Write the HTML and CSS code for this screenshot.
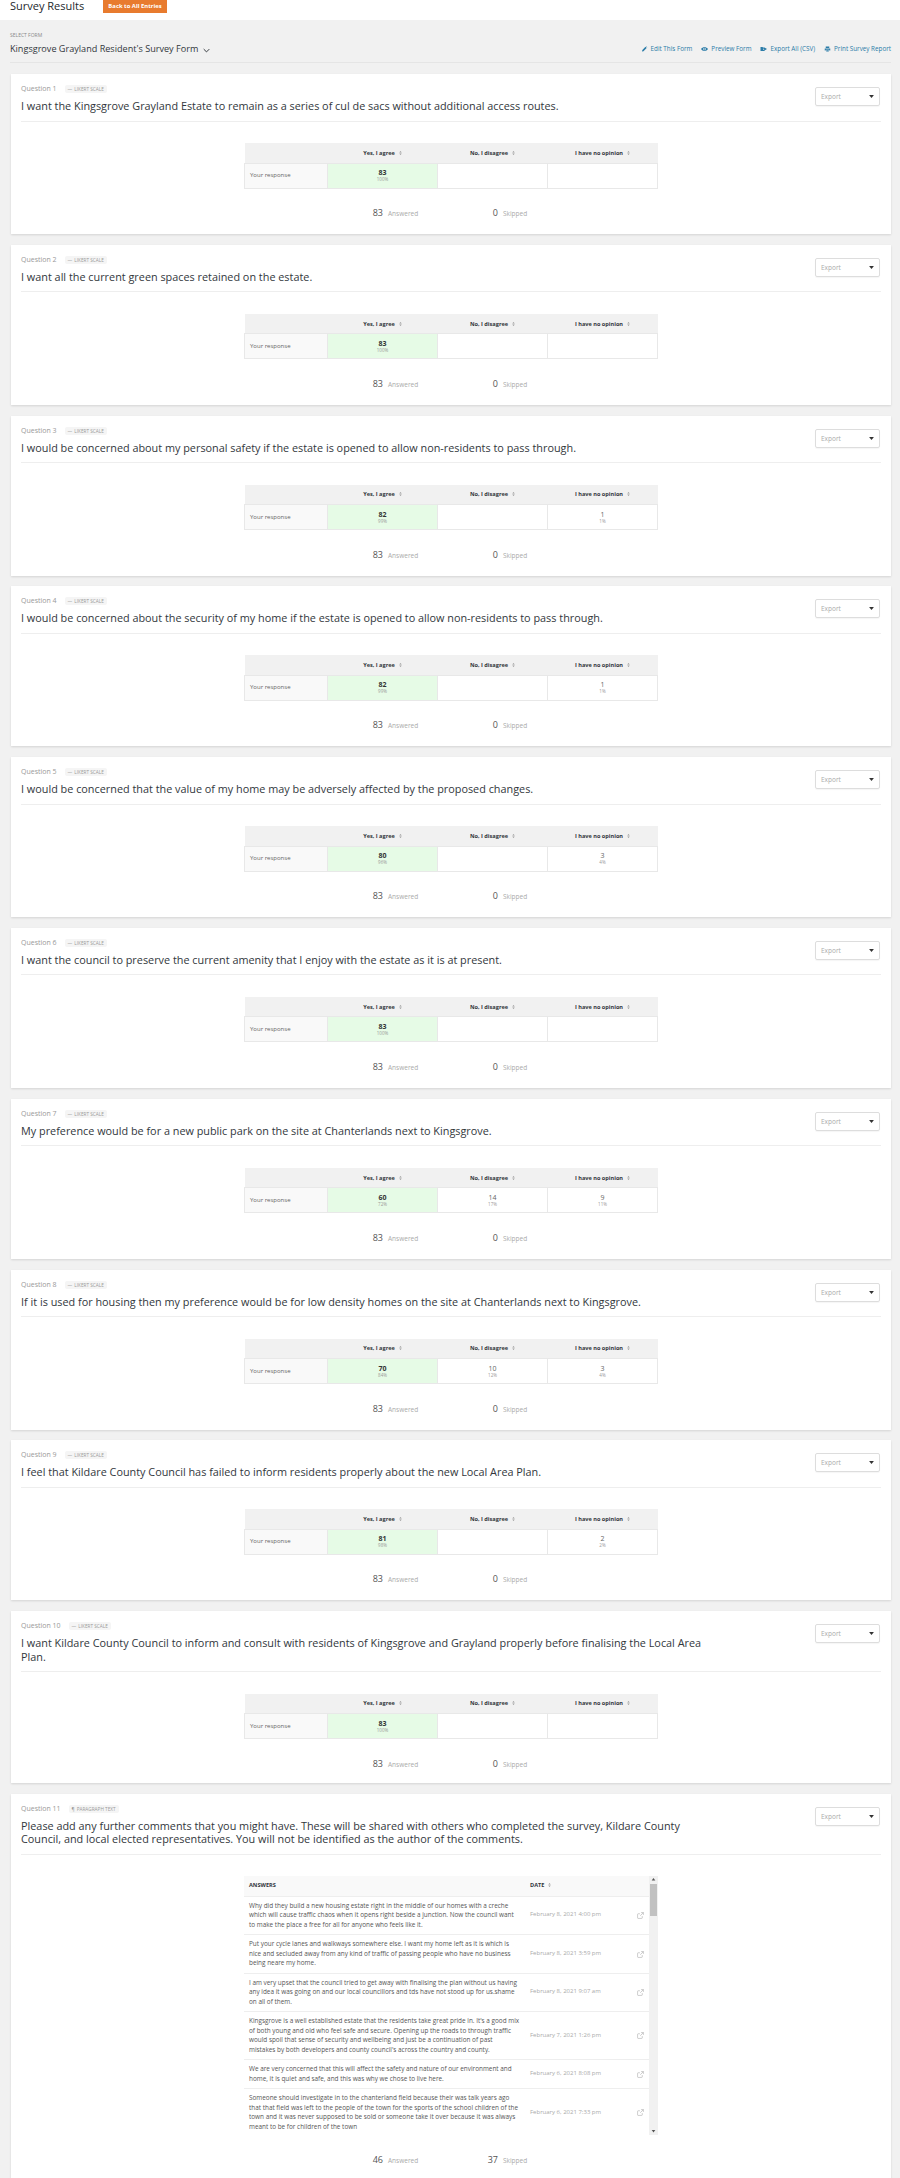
FILE: index.html
```html
<!DOCTYPE html>
<html lang="en">
<head>
    <meta charset="UTF-8">
    <title>Survey Results</title>
    <link rel="stylesheet" href="styles.css">
</head>
<body>
    <svg class="icon-defs" width="0" height="0">
        <symbol id="sort" viewBox="0 0 6 8"><path d="M3 0 5.500 3H.5zM3 8 .5 5h5z"/></symbol>
        <symbol id="ext" viewBox="0 0 12 12"><path d="M9 7v3a1 1 0 0 1-1 1H2a1 1 0 0 1-1-1V4a1 1 0 0 1 1-1h3M7 1h4v4M11 1 5.500 6.500" fill="none" stroke="currentColor"/></symbol>
        <symbol id="caret" viewBox="0 0 8 5"><path d="M0 0h8L4 5z"/></symbol>
    </svg>

    <header class="top-bar">
        <h1>Survey Results</h1>
        <a class="back-button">Back to All Entries</a>
    </header>

    <div class="form-bar">
        <div>
            <div class="select-label">SELECT FORM</div>
            <div class="form-name">Kingsgrove Grayland Resident's Survey Form
                <svg class="chevron" viewBox="0 0 10 6"><path d="M1 1l4 4 4-4" fill="none" stroke="currentColor" stroke-width="1.400"/></svg>
            </div>
        </div>
        <nav class="form-links">
            <a><svg viewBox="0 0 12 12"><path d="M1 11l.7-3L8 1.700 10.300 4 4 10.300zM9 .8l.7-.3 1.800 1.800-.3.700z"/></svg>Edit This Form</a>
            <a><svg viewBox="0 0 14 12"><path fill-rule="evenodd" d="M7 2c3 0 5.500 2 7 4-1.500 2-4 4-7 4S1.500 8 0 6c1.500-2 4-4 7-4zm0 1.500a2.500 2.500 0 1 0 0 5 2.500 2.500 0 0 0 0-5z"/><circle cx="7" cy="6" r="1.300"/></svg>Preview Form</a>
            <a><svg viewBox="0 0 14 12"><path d="M1 2h4l1 1h3v2H6v3h3v2H1zM9 4.500V3l5 3-5 3V7.500H7v-3z"/></svg>Export All (CSV)</a>
            <a><svg viewBox="0 0 13 12"><path fill-rule="evenodd" d="M3 1h7v3H3zM1 5h11v4h-2V7.500H3V9H1zM4 8.500h5V11H4z"/></svg>Print Survey Report</a>
        </nav>
    </div>

    <main class="questions">
        <section class="card">
            <div class="card-head">
                <div class="card-title">
                    <div class="question-meta"><span>Question 1</span><span class="type-tag"><i>&#8212;</i>LIKERT SCALE</span></div>
                    <h2>I want the Kingsgrove Grayland Estate to remain as a series of cul de sacs without additional access routes.</h2>
                </div>
                <div class="export-select">Export<svg viewBox="0 0 8 5"><use href="#caret"/></svg></div>
            </div>
            <table class="likert">
                <tr><th></th><th>Yes, I agree<svg viewBox="0 0 6 8"><use href="#sort"/></svg></th><th>No, I disagree<svg viewBox="0 0 6 8"><use href="#sort"/></svg></th><th>I have no opinion<svg viewBox="0 0 6 8"><use href="#sort"/></svg></th></tr>
                <tr><td class="row-label">Your response</td><td class="top"><b>83</b><small>100%</small></td><td></td><td></td></tr>
            </table>
            <div class="totals"><span><strong>83</strong>Answered</span><span><strong>0</strong>Skipped</span></div>
        </section>

        <section class="card">
            <div class="card-head">
                <div class="card-title">
                    <div class="question-meta"><span>Question 2</span><span class="type-tag"><i>&#8212;</i>LIKERT SCALE</span></div>
                    <h2>I want all the current green spaces retained on the estate.</h2>
                </div>
                <div class="export-select">Export<svg viewBox="0 0 8 5"><use href="#caret"/></svg></div>
            </div>
            <table class="likert">
                <tr><th></th><th>Yes, I agree<svg viewBox="0 0 6 8"><use href="#sort"/></svg></th><th>No, I disagree<svg viewBox="0 0 6 8"><use href="#sort"/></svg></th><th>I have no opinion<svg viewBox="0 0 6 8"><use href="#sort"/></svg></th></tr>
                <tr><td class="row-label">Your response</td><td class="top"><b>83</b><small>100%</small></td><td></td><td></td></tr>
            </table>
            <div class="totals"><span><strong>83</strong>Answered</span><span><strong>0</strong>Skipped</span></div>
        </section>

        <section class="card">
            <div class="card-head">
                <div class="card-title">
                    <div class="question-meta"><span>Question 3</span><span class="type-tag"><i>&#8212;</i>LIKERT SCALE</span></div>
                    <h2>I would be concerned about my personal safety if the estate is opened to allow non-residents to pass through.</h2>
                </div>
                <div class="export-select">Export<svg viewBox="0 0 8 5"><use href="#caret"/></svg></div>
            </div>
            <table class="likert">
                <tr><th></th><th>Yes, I agree<svg viewBox="0 0 6 8"><use href="#sort"/></svg></th><th>No, I disagree<svg viewBox="0 0 6 8"><use href="#sort"/></svg></th><th>I have no opinion<svg viewBox="0 0 6 8"><use href="#sort"/></svg></th></tr>
                <tr><td class="row-label">Your response</td><td class="top"><b>82</b><small>99%</small></td><td></td><td>1<small>1%</small></td></tr>
            </table>
            <div class="totals"><span><strong>83</strong>Answered</span><span><strong>0</strong>Skipped</span></div>
        </section>

        <section class="card">
            <div class="card-head">
                <div class="card-title">
                    <div class="question-meta"><span>Question 4</span><span class="type-tag"><i>&#8212;</i>LIKERT SCALE</span></div>
                    <h2>I would be concerned about the security of my home if the estate is opened to allow non-residents to pass through.</h2>
                </div>
                <div class="export-select">Export<svg viewBox="0 0 8 5"><use href="#caret"/></svg></div>
            </div>
            <table class="likert">
                <tr><th></th><th>Yes, I agree<svg viewBox="0 0 6 8"><use href="#sort"/></svg></th><th>No, I disagree<svg viewBox="0 0 6 8"><use href="#sort"/></svg></th><th>I have no opinion<svg viewBox="0 0 6 8"><use href="#sort"/></svg></th></tr>
                <tr><td class="row-label">Your response</td><td class="top"><b>82</b><small>99%</small></td><td></td><td>1<small>1%</small></td></tr>
            </table>
            <div class="totals"><span><strong>83</strong>Answered</span><span><strong>0</strong>Skipped</span></div>
        </section>

        <section class="card">
            <div class="card-head">
                <div class="card-title">
                    <div class="question-meta"><span>Question 5</span><span class="type-tag"><i>&#8212;</i>LIKERT SCALE</span></div>
                    <h2>I would be concerned that the value of my home may be adversely affected by the proposed changes.</h2>
                </div>
                <div class="export-select">Export<svg viewBox="0 0 8 5"><use href="#caret"/></svg></div>
            </div>
            <table class="likert">
                <tr><th></th><th>Yes, I agree<svg viewBox="0 0 6 8"><use href="#sort"/></svg></th><th>No, I disagree<svg viewBox="0 0 6 8"><use href="#sort"/></svg></th><th>I have no opinion<svg viewBox="0 0 6 8"><use href="#sort"/></svg></th></tr>
                <tr><td class="row-label">Your response</td><td class="top"><b>80</b><small>96%</small></td><td></td><td>3<small>4%</small></td></tr>
            </table>
            <div class="totals"><span><strong>83</strong>Answered</span><span><strong>0</strong>Skipped</span></div>
        </section>

        <section class="card">
            <div class="card-head">
                <div class="card-title">
                    <div class="question-meta"><span>Question 6</span><span class="type-tag"><i>&#8212;</i>LIKERT SCALE</span></div>
                    <h2>I want the council to preserve the current amenity that I enjoy with the estate as it is at present.</h2>
                </div>
                <div class="export-select">Export<svg viewBox="0 0 8 5"><use href="#caret"/></svg></div>
            </div>
            <table class="likert">
                <tr><th></th><th>Yes, I agree<svg viewBox="0 0 6 8"><use href="#sort"/></svg></th><th>No, I disagree<svg viewBox="0 0 6 8"><use href="#sort"/></svg></th><th>I have no opinion<svg viewBox="0 0 6 8"><use href="#sort"/></svg></th></tr>
                <tr><td class="row-label">Your response</td><td class="top"><b>83</b><small>100%</small></td><td></td><td></td></tr>
            </table>
            <div class="totals"><span><strong>83</strong>Answered</span><span><strong>0</strong>Skipped</span></div>
        </section>

        <section class="card">
            <div class="card-head">
                <div class="card-title">
                    <div class="question-meta"><span>Question 7</span><span class="type-tag"><i>&#8212;</i>LIKERT SCALE</span></div>
                    <h2>My preference would be for a new public park on the site at Chanterlands next to Kingsgrove.</h2>
                </div>
                <div class="export-select">Export<svg viewBox="0 0 8 5"><use href="#caret"/></svg></div>
            </div>
            <table class="likert">
                <tr><th></th><th>Yes, I agree<svg viewBox="0 0 6 8"><use href="#sort"/></svg></th><th>No, I disagree<svg viewBox="0 0 6 8"><use href="#sort"/></svg></th><th>I have no opinion<svg viewBox="0 0 6 8"><use href="#sort"/></svg></th></tr>
                <tr><td class="row-label">Your response</td><td class="top"><b>60</b><small>72%</small></td><td>14<small>17%</small></td><td>9<small>11%</small></td></tr>
            </table>
            <div class="totals"><span><strong>83</strong>Answered</span><span><strong>0</strong>Skipped</span></div>
        </section>

        <section class="card">
            <div class="card-head">
                <div class="card-title">
                    <div class="question-meta"><span>Question 8</span><span class="type-tag"><i>&#8212;</i>LIKERT SCALE</span></div>
                    <h2>If it is used for housing then my preference would be for low density homes on the site at Chanterlands next to Kingsgrove.</h2>
                </div>
                <div class="export-select">Export<svg viewBox="0 0 8 5"><use href="#caret"/></svg></div>
            </div>
            <table class="likert">
                <tr><th></th><th>Yes, I agree<svg viewBox="0 0 6 8"><use href="#sort"/></svg></th><th>No, I disagree<svg viewBox="0 0 6 8"><use href="#sort"/></svg></th><th>I have no opinion<svg viewBox="0 0 6 8"><use href="#sort"/></svg></th></tr>
                <tr><td class="row-label">Your response</td><td class="top"><b>70</b><small>84%</small></td><td>10<small>12%</small></td><td>3<small>4%</small></td></tr>
            </table>
            <div class="totals"><span><strong>83</strong>Answered</span><span><strong>0</strong>Skipped</span></div>
        </section>

        <section class="card">
            <div class="card-head">
                <div class="card-title">
                    <div class="question-meta"><span>Question 9</span><span class="type-tag"><i>&#8212;</i>LIKERT SCALE</span></div>
                    <h2>I feel that Kildare County Council has failed to inform residents properly about the new Local Area Plan.</h2>
                </div>
                <div class="export-select">Export<svg viewBox="0 0 8 5"><use href="#caret"/></svg></div>
            </div>
            <table class="likert">
                <tr><th></th><th>Yes, I agree<svg viewBox="0 0 6 8"><use href="#sort"/></svg></th><th>No, I disagree<svg viewBox="0 0 6 8"><use href="#sort"/></svg></th><th>I have no opinion<svg viewBox="0 0 6 8"><use href="#sort"/></svg></th></tr>
                <tr><td class="row-label">Your response</td><td class="top"><b>81</b><small>98%</small></td><td></td><td>2<small>2%</small></td></tr>
            </table>
            <div class="totals"><span><strong>83</strong>Answered</span><span><strong>0</strong>Skipped</span></div>
        </section>

        <section class="card">
            <div class="card-head">
                <div class="card-title">
                    <div class="question-meta"><span>Question 10</span><span class="type-tag"><i>&#8212;</i>LIKERT SCALE</span></div>
                    <h2>I want Kildare County Council to inform and consult with residents of Kingsgrove and Grayland properly before finalising the Local Area Plan.</h2>
                </div>
                <div class="export-select">Export<svg viewBox="0 0 8 5"><use href="#caret"/></svg></div>
            </div>
            <table class="likert">
                <tr><th></th><th>Yes, I agree<svg viewBox="0 0 6 8"><use href="#sort"/></svg></th><th>No, I disagree<svg viewBox="0 0 6 8"><use href="#sort"/></svg></th><th>I have no opinion<svg viewBox="0 0 6 8"><use href="#sort"/></svg></th></tr>
                <tr><td class="row-label">Your response</td><td class="top"><b>83</b><small>100%</small></td><td></td><td></td></tr>
            </table>
            <div class="totals"><span><strong>83</strong>Answered</span><span><strong>0</strong>Skipped</span></div>
        </section>

        <section class="card">
            <div class="card-head">
                <div class="card-title">
                    <div class="question-meta"><span>Question 11</span><span class="type-tag"><i>&#182;</i>PARAGRAPH TEXT</span></div>
                    <h2>Please add any further comments that you might have. These will be shared with others who completed the survey, Kildare County Council, and local elected representatives. You will not be identified as the author of the comments.</h2>
                </div>
                <div class="export-select">Export<svg viewBox="0 0 8 5"><use href="#caret"/></svg></div>
            </div>
            <div class="answers-box">
                <div class="answers-scroll">
                    <table class="answers">
                        <tr><th>ANSWERS</th><th>DATE<svg viewBox="0 0 6 8"><use href="#sort"/></svg></th><th></th></tr>
                        <tr><td>Why did they build a new housing estate right in the middle of our homes with a creche which will cause traffic chaos when it opens right beside a junction. Now the council want to make the place a free for all for anyone who feels like it.</td><td class="date">February 8, 2021 4:00 pm</td><td class="link"><svg viewBox="0 0 12 12"><use href="#ext"/></svg></td></tr>
                        <tr><td>Put your cycle lanes and walkways somewhere else. I want my home left as it is which is nice and secluded away from any kind of traffic of passing people who have no business being neare my home.</td><td class="date">February 8, 2021 3:59 pm</td><td class="link"><svg viewBox="0 0 12 12"><use href="#ext"/></svg></td></tr>
                        <tr><td>I am very upset that the council tried to get away with finalising the plan without us having any idea it was going on and our local councillors and tds have not stood up for us.shame on all of them.</td><td class="date">February 8, 2021 9:07 am</td><td class="link"><svg viewBox="0 0 12 12"><use href="#ext"/></svg></td></tr>
                        <tr><td>Kingsgrove is a well established estate that the residents take great pride in. It's a good mix of both young and old who feel safe and secure. Opening up the roads to through traffic would spoil that sense of security and wellbeing and just be a continuation of past mistakes by both developers and county council's across the country and county.</td><td class="date">February 7, 2021 1:26 pm</td><td class="link"><svg viewBox="0 0 12 12"><use href="#ext"/></svg></td></tr>
                        <tr><td>We are very concerned that this will affect the safety and nature of our environment and home, it is quiet and safe, and this was why we chose to live here.</td><td class="date">February 6, 2021 8:08 pm</td><td class="link"><svg viewBox="0 0 12 12"><use href="#ext"/></svg></td></tr>
                        <tr><td>Someone should investigate in to the chanterland field because their was talk years ago that that field was left to the people of the town for the sports of the school children of the town and it was never supposed to be sold or someone take it over because it was always meant to be for children of the town</td><td class="date">February 6, 2021 7:33 pm</td><td class="link"><svg viewBox="0 0 12 12"><use href="#ext"/></svg></td></tr>
                    </table>
                </div>
                <div class="scrollbar">
                    <svg class="arrow" viewBox="0 0 8 5"><path d="M4 0l3 4H1z"/></svg>
                    <div class="thumb"></div>
                    <svg class="arrow arrow-down" viewBox="0 0 8 5"><path d="M1 0h6L4 4z"/></svg>
                </div>
            </div>
            <div class="totals"><span><strong>46</strong>Answered</span><span><strong>37</strong>Skipped</span></div>
        </section>
    </main>
</body>
</html>
```
FILE: styles.css
```css
* {
    box-sizing: border-box;
}
html, body {
    height: 2178px;
    overflow: hidden;
}
body {
    margin: 0;
    background-color: #f1f1f1;
    color: #32373c;
    font-family: "Open Sans", "Noto Sans", sans-serif;
    font-size: 9px;
}
.icon-defs {
    position: absolute;
}
.top-bar {
    height: 20px;
    background-color: white;
    padding-left: 10px;
    display: flex;
    overflow: hidden;
}
h1 {
    margin: 0 18px 0 0;
    width: 75px;
    white-space: nowrap;
    font-size: 11px;
    font-weight: 400;
    line-height: 12px;
    color: #23282d;
}
.back-button {
    height: 13px;
    width: 64px;
    background-color: #e87b2e;
    color: white;
    font-size: 5.900px;
    font-weight: 700;
    line-height: 12px;
    text-align: center;
}
.form-bar {
    margin: 0 9px 0 10px;
    height: 43px;
    border-bottom: 1px solid #e5e5e5;
    display: flex;
    justify-content: space-between;
}
.select-label {
    margin-top: 12px;
    font-size: 5px;
    line-height: 7px;
    color: #8a8a8a;
}
.form-name {
    margin-top: 3px;
    font-size: 9.100px;
    line-height: 14px;
    display: flex;
    align-items: center;
    gap: 5px;
}
.chevron {
    width: 7px;
    height: 5px;
    margin-top: 2px;
}
.form-links {
    display: flex;
    gap: 9px;
    margin-top: 23px;
    line-height: 12px;
    font-size: 6.300px;
    color: #2b7ca8;
}
.form-links a {
    display: flex;
    align-items: center;
    gap: 3px;
    height: 12px;
}
.form-links svg {
    width: 7px;
    height: 6px;
    fill: #2b7ca8;
}
.questions {
    margin: 11px 9px 0 11px;
    display: flex;
    flex-direction: column;
    gap: 10.800px;
}
.card {
    background-color: white;
    box-shadow: 0 1px 2px rgba(0, 0, 0, 0.12);
    padding: 0 10px;
    height: 160px;
    flex: none;
}
.card:nth-child(10) {
    height: 172px;
}
.card:nth-child(11) {
    height: 400px;
}
.card-head {
    border-bottom: 1px solid #eeeeee;
    display: flex;
    justify-content: space-between;
    align-items: flex-start;
    padding: 10px 0 8px;
}
.card-title {
    width: 695px;
}
.question-meta {
    display: flex;
    align-items: center;
    gap: 8px;
    height: 10px;
    font-size: 7px;
    line-height: 10px;
    color: #999999;
}
.type-tag {
    background-color: #f5f5f5;
    border-radius: 2px;
    padding: 0 3px;
    font-size: 4.700px;
    height: 8px;
    line-height: 8px;
    color: #9a9a9a;
}
.type-tag i {
    font-style: normal;
    margin-right: 2px;
}
.card h2 {
    margin: 5px 0 0;
    font-size: 10.850px;
    font-weight: 400;
    line-height: 13.500px;
    color: #32373c;
}
.export-select {
    margin: 3px 1px 0 0;
    width: 65px;
    height: 19px;
    border: 1px solid #dddddd;
    border-radius: 2px;
    box-shadow: 0 1px 1px rgba(0, 0, 0, 0.04);
    padding: 0 5px;
    display: flex;
    align-items: center;
    justify-content: space-between;
    font-size: 6.500px;
    color: #aaaaaa;
}
.export-select svg {
    width: 5px;
    height: 3px;
    fill: #333333;
}
.likert {
    width: 414px;
    margin: 21.500px auto 0;
    border-collapse: collapse;
    table-layout: fixed;
    font-size: 5.600px;
}
.likert th {
    background-color: #f1f1f1;
    height: 20px;
    padding: 0;
    font-weight: 700;
    color: #32373c;
}
.likert th:first-child {
    width: 83px;
}
.likert th svg, .answers th svg {
    width: 3px;
    height: 4px;
    margin-left: 4px;
    fill: #999999;
}
.likert td {
    height: 25px;
    padding: 0;
    border: 1px solid #e8e8e8;
    text-align: center;
    line-height: 7px;
    font-size: 7px;
    color: #666666;
}
.likert .row-label {
    background-color: #f9f9f9;
    text-align: left;
    padding-left: 5px;
    font-size: 6px;
    color: #666666;
}
.likert .top {
    background-color: #e6fbe6;
}
.likert b {
    display: block;
    color: #333333;
}
.likert small {
    display: block;
    font-size: 4.500px;
    line-height: 6px;
    color: #999999;
}
.totals {
    display: grid;
    grid-template-columns: 115px 115px;
    justify-content: center;
    margin-top: 17.500px;
    height: 14px;
    line-height: 14px;
    font-size: 6.500px;
    color: #aaaaaa;
}
.totals strong {
    display: inline-block;
    width: 47px;
    text-align: right;
    margin-right: 5px;
    font-size: 9px;
    font-weight: 400;
    color: #555555;
}
.answers-box {
    width: 414px;
    height: 259px;
    margin: 21.500px auto 0;
    display: flex;
}
.answers-scroll {
    flex: 1;
    overflow: hidden;
}
.answers {
    width: 100%;
    border-collapse: collapse;
    table-layout: fixed;
    font-size: 6.400px;
    line-height: 9.500px;
    color: #555555;
}
.answers th {
    background-color: #f9f9f9;
    height: 20px;
    padding: 0 5px;
    text-align: left;
    font-size: 5.600px;
    font-weight: 700;
    color: #32373c;
}
.answers th:nth-child(2) {
    width: 100px;
}
.answers th:nth-child(3) {
    width: 24px;
}
.answers td {
    padding: 4px 5px 5px;
    border-top: 1px solid #eeeeee;
}
.answers .date {
    color: #aaaaaa;
    white-space: nowrap;
    font-size: 6px;
}
.answers .link {
    color: #aaaaaa;
    padding: 0 0 0 6px;
}
.answers .link svg {
    width: 7px;
    height: 7px;
    display: block;
    margin: 0 auto;
}
.scrollbar {
    width: 9px;
    background-color: #f1f1f1;
    display: flex;
    flex-direction: column;
    align-items: center;
}
.arrow {
    width: 5px;
    height: 3px;
    margin: 2px 0 3px;
    fill: #555555;
}
.arrow-down {
    margin: auto 0 2px;
}
.thumb {
    width: 7px;
    height: 32px;
    background-color: #c1c1c1;
}
```
